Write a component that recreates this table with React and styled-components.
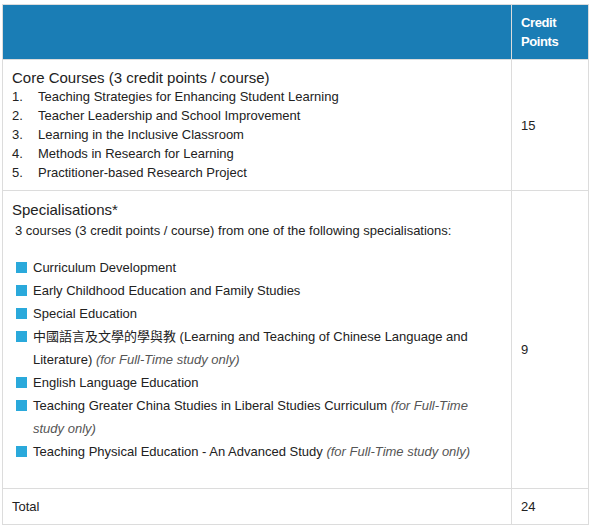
import React from "react";
import styled, { createGlobalStyle } from "styled-components";

const Global = createGlobalStyle`
  html, body { margin: 0; padding: 0; background: #fff; }
  body { font-family: "Liberation Sans", Arial, "Noto Sans CJK TC", sans-serif; color: #222; }
`;

const Page = styled.div`
  padding: 4px 3px 2px 2px;
`;

const Table = styled.table`
  width: 586px;
  border-collapse: collapse;
  table-layout: fixed;
  font-size: 13px;
`;

const HeadCell = styled.th`
  background: #1a7db5;
  color: #fff;
  border: 1px solid #dcdcdc;
  height: 55px;
  padding: 0 9px;
  text-align: left;
  vertical-align: middle;
  font-weight: bold;
  font-size: 13px;
  line-height: 19px;
  letter-spacing: -0.4px;
  width: ${(p) => p.$w || "auto"};
  box-sizing: border-box;
`;

const Cell = styled.td`
  border: 1px solid #dcdcdc;
  padding: ${(p) => p.$pad || "8px 9px"};
  vertical-align: ${(p) => p.$valign || "middle"};
  line-height: 19px;
  text-align: left;
`;

const Heading = styled.div`
  font-size: 15px;
  line-height: 19px;
  color: #222;
`;

const NumList = styled.ol`
  list-style: none;
  margin: 0;
  padding: 0;
`;

const NumItem = styled.li`
  display: flex;
  line-height: 19px;
`;

const Num = styled.span`
  width: 26px;
  flex: none;
`;

const Intro = styled.p`
  margin: 1px 0 15px 3px;
  line-height: 21px;
`;

const SpecList = styled.ul`
  list-style: none;
  margin: 0 0 17px 4px;
  padding: 0;
`;

const SpecItem = styled.li`
  display: flex;
  align-items: flex-start;
  line-height: 23px;
`;

const Square = styled.span`
  flex: none;
  width: 11px;
  height: 11px;
  margin: 6px 6px 0 0;
  background: #2aa9db;
`;

const ItemText = styled.p`
  margin: 0;
`;

const Note = styled.em`
  color: #555;
`;

const core = [
  "Teaching Strategies for Enhancing Student Learning",
  "Teacher Leadership and School Improvement",
  "Learning in the Inclusive Classroom",
  "Methods in Research for Learning",
  "Practitioner-based Research Project",
];

const specs = [
  { t: "Curriculum Development" },
  { t: "Early Childhood Education and Family Studies" },
  { t: "Special Education" },
  {
    t: "中國語言及文學的學與教 (Learning and Teaching of Chinese Language and Literature)",
    n: "(for Full-Time study only)",
  },
  { t: "English Language Education" },
  {
    t: "Teaching Greater China Studies in Liberal Studies Curriculum",
    n: "(for Full-Time study only)",
  },
  {
    t: "Teaching Physical Education - An Advanced Study",
    n: "(for Full-Time study only)",
  },
];

export default function App() {
  return (
    <Page>
      <Global />
      <Table>
        <thead>
          <tr>
            <HeadCell $w="509px"></HeadCell>
            <HeadCell $w="77px">
              Credit
              <br />
              Points
            </HeadCell>
          </tr>
        </thead>
        <tbody>
          <tr>
            <Cell $valign="top">
              <Heading>Core Courses (3 credit points / course)</Heading>
              <NumList>
                {core.map((c, i) => (
                  <NumItem key={c}>
                    <Num>{i + 1}.</Num>
                    <span>{c}</span>
                  </NumItem>
                ))}
              </NumList>
            </Cell>
            <Cell>15</Cell>
          </tr>
          <tr>
            <Cell $valign="top" $pad="9px 9px 8px">
              <Heading>Specialisations*</Heading>
              <Intro>3 courses (3 credit points / course) from one of the following specialisations:</Intro>
              <SpecList>
                {specs.map((s) => (
                  <SpecItem key={s.t}>
                    <Square />
                    <ItemText>
                      {s.t}
                      {s.n ? " " : ""}
                      {s.n && <Note>{s.n}</Note>}
                    </ItemText>
                  </SpecItem>
                ))}
              </SpecList>
            </Cell>
            <Cell $pad="28px 9px 8px">9</Cell>
          </tr>
          <tr>
            <Cell>Total</Cell>
            <Cell>24</Cell>
          </tr>
        </tbody>
      </Table>
    </Page>
  );
}
